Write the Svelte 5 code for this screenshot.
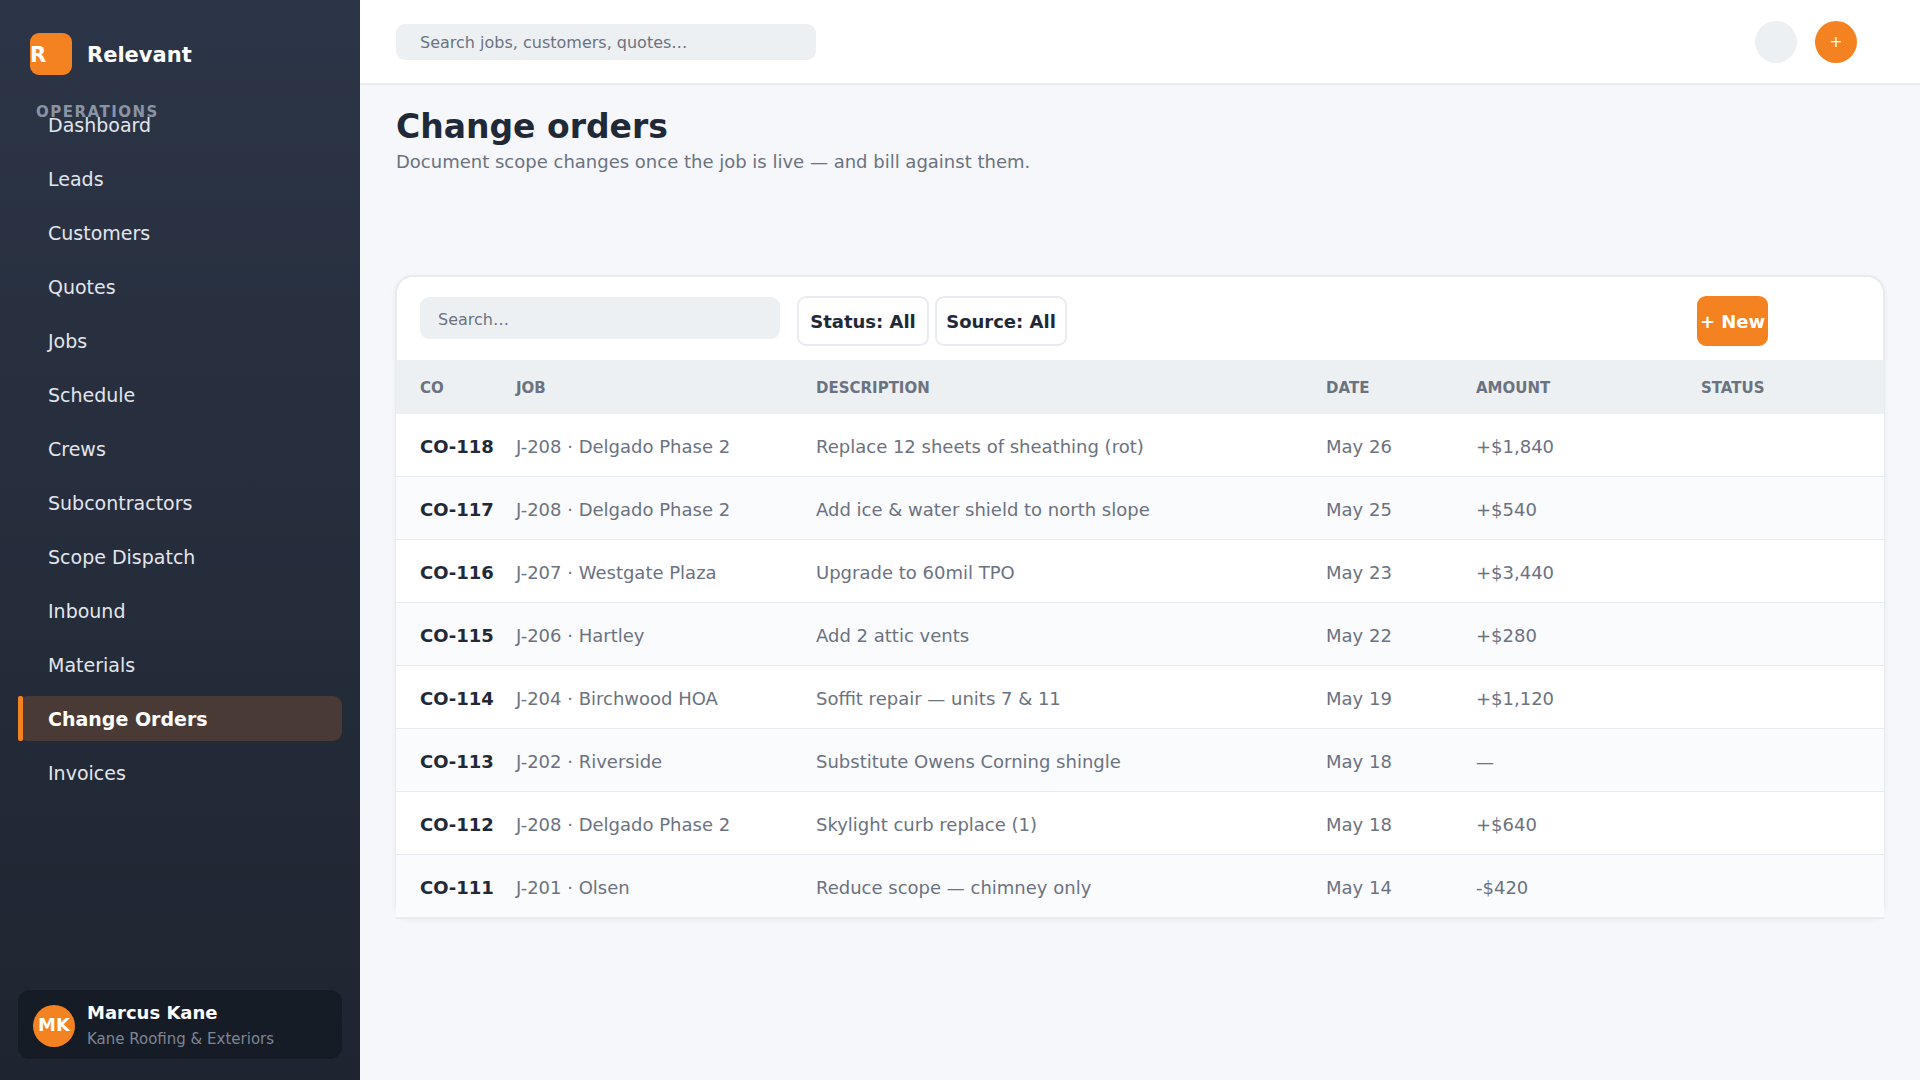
<script lang="ts">
  const navItems = [
    'Dashboard',
    'Leads',
    'Customers',
    'Quotes',
    'Jobs',
    'Schedule',
    'Crews',
    'Subcontractors',
    'Scope Dispatch',
    'Inbound',
    'Materials',
    'Change Orders',
    'Invoices'
  ];

  const orders = [
    { id: 'CO-118', job: 'J-208 · Delgado Phase 2', description: 'Replace 12 sheets of sheathing (rot)', date: 'May 26', amount: '+$1,840' },
    { id: 'CO-117', job: 'J-208 · Delgado Phase 2', description: 'Add ice & water shield to north slope', date: 'May 25', amount: '+$540' },
    { id: 'CO-116', job: 'J-207 · Westgate Plaza', description: 'Upgrade to 60mil TPO', date: 'May 23', amount: '+$3,440' },
    { id: 'CO-115', job: 'J-206 · Hartley', description: 'Add 2 attic vents', date: 'May 22', amount: '+$280' },
    { id: 'CO-114', job: 'J-204 · Birchwood HOA', description: 'Soffit repair — units 7 & 11', date: 'May 19', amount: '+$1,120' },
    { id: 'CO-113', job: 'J-202 · Riverside', description: 'Substitute Owens Corning shingle', date: 'May 18', amount: '—' },
    { id: 'CO-112', job: 'J-208 · Delgado Phase 2', description: 'Skylight curb replace (1)', date: 'May 18', amount: '+$640' },
    { id: 'CO-111', job: 'J-201 · Olsen', description: 'Reduce scope — chimney only', date: 'May 14', amount: '-$420' }
  ];

  let active = $state('Change Orders');
  let globalSearch = $state('');
  let tableSearch = $state('');

  let visible = $derived(
    orders.filter((o) =>
      `${o.id} ${o.job} ${o.description}`.toLowerCase().includes(tableSearch.trim().toLowerCase())
    )
  );

  function select(e: MouseEvent, item: string) {
    e.preventDefault();
    active = item;
  }
</script>

<div class="app">
  <aside class="sidebar">
    <div class="brand">
      <span class="logo">R</span>
      <span class="brand-name">Relevant</span>
    </div>

    <p class="section">OPERATIONS</p>
    <nav>
      {#each navItems as item}
        <a href="#top" class="nav-item" class:active={item === active} onclick={(e) => select(e, item)}>{item}</a>
      {/each}
    </nav>

    <div class="user">
      <span class="avatar">MK</span>
      <div>
        <div class="user-name">Marcus Kane</div>
        <div class="user-company">Kane Roofing &amp; Exteriors</div>
      </div>
    </div>
  </aside>

  <div class="main">
    <header class="topbar">
      <input
        class="search global"
        type="text"
        aria-label="Search jobs, customers, quotes"
        placeholder="Search jobs, customers, quotes…"
        bind:value={globalSearch}
      />
      <div class="actions">
        <button class="round" aria-label="Notifications"></button>
        <button class="round add">+</button>
      </div>
    </header>

    <main>
      <h1>Change orders</h1>
      <p class="subtitle">Document scope changes once the job is live — and bill against them.</p>

      <section class="card">
        <div class="toolbar">
          <input
            class="search local"
            type="text"
            aria-label="Search change orders"
            placeholder="Search…"
            bind:value={tableSearch}
          />
          <div class="filters">
            <button class="btn">Status: All</button>
            <button class="btn">Source: All</button>
          </div>
          <button class="btn primary">+ New</button>
        </div>

        <table>
          <colgroup>
            <col class="col-id" />
            <col class="col-job" />
            <col />
            <col class="col-date" />
            <col class="col-amount" />
            <col class="col-status" />
          </colgroup>
          <thead>
            <tr>
              <th>CO</th>
              <th>JOB</th>
              <th>DESCRIPTION</th>
              <th>DATE</th>
              <th>AMOUNT</th>
              <th>STATUS</th>
            </tr>
          </thead>
          <tbody>
            {#each visible as order (order.id)}
              <tr>
                <td class="id">{order.id}</td>
                <td>{order.job}</td>
                <td>{order.description}</td>
                <td>{order.date}</td>
                <td>{order.amount}</td>
                <td></td>
              </tr>
            {/each}
          </tbody>
        </table>
      </section>
    </main>
  </div>
</div>

<style>
  :global(body) {
    background: #f5f7fb;
  }

  .app {
    display: flex;
    min-height: 100vh;
    font-family: 'DejaVu Sans', sans-serif;
    font-size: 18px;
    color: #1f2937;
  }

  .app * {
    box-sizing: border-box;
  }

  input,
  button {
    font-family: inherit;
  }

  .sidebar {
    flex: 0 0 360px;
    display: flex;
    flex-direction: column;
    padding: 33px 18px 21px;
    background: linear-gradient(180deg, #2c3547, #1f2530);
  }

  .brand {
    display: flex;
    gap: 15px;
    padding-left: 12px;
    color: #fff;
    font-size: 21px;
    font-weight: 700;
    line-height: 45px;
  }

  .logo {
    width: 42px;
    height: 42px;
    border-radius: 9px;
    background: #f58220;
  }

  /* the section label sits right on top of the first item */
  .section {
    margin: 25px 0 -19px;
    padding-left: 18px;
    color: #8a93a3;
    font-size: 15px;
    font-weight: 700;
    line-height: 18px;
    letter-spacing: 0.1em;
  }

  nav {
    display: flex;
    flex-direction: column;
    gap: 9px;
  }

  .nav-item {
    height: 45px;
    padding-left: 30px;
    border-radius: 9px;
    color: #e2e6ec;
    font-size: 19px;
    line-height: 47px;
    text-decoration: none;
  }

  .nav-item.active {
    display: flex;
    padding-left: 0;
    background: #4a3a35;
    color: #fff;
    font-weight: 700;
  }

  .nav-item.active::before {
    content: '';
    width: 5px;
    margin-right: 25px;
    border-radius: 2px;
    background: #f58220;
  }

  .user {
    display: flex;
    align-items: center;
    gap: 12px;
    height: 69px;
    margin-top: auto;
    padding: 2px 0 0 15px;
    border-radius: 12px;
    background: #161c25;
  }

  .avatar {
    width: 42px;
    height: 42px;
    border-radius: 50%;
    background: #f58220;
    color: #fff;
    font-weight: 700;
    line-height: 40px;
    text-align: center;
  }

  .user-name {
    color: #fff;
    font-weight: 700;
    line-height: 26px;
  }

  .user-company {
    color: #7d8593;
    font-size: 15px;
    line-height: 26px;
  }

  .main {
    flex: 1;
    min-width: 0;
  }

  .topbar {
    display: flex;
    align-items: center;
    justify-content: space-between;
    height: 85px;
    padding: 0 63px 0 36px;
    border-bottom: 2px solid #e8ecf0;
    background: #fff;
  }

  .search {
    border: none;
    border-radius: 9px;
    outline: none;
    background: #ecf0f3;
    color: #1f2937;
    font-size: 16px;
  }

  .search::placeholder {
    color: #6b7280;
    opacity: 1;
  }

  .global {
    width: 420px;
    height: 36px;
    padding: 2px 24px 0;
  }

  .actions {
    display: flex;
    gap: 18px;
  }

  .round {
    width: 42px;
    height: 42px;
    padding: 0;
    border: none;
    border-radius: 50%;
    background: #ecf0f3;
    cursor: pointer;
  }

  .round.add {
    background: #f58220;
    color: #fff;
    font-size: 16px;
  }

  main {
    padding: 22px 35px 36px;
  }

  h1 {
    margin: 0 0 3px;
    padding-left: 1px;
    font-size: 33px;
    line-height: 40px;
  }

  .subtitle {
    margin: 0 0 101px;
    padding-left: 1px;
    color: #6b7280;
    line-height: 24px;
  }

  .card {
    border: 2px solid #e8ebf0;
    border-radius: 18px;
    background: #fff;
    box-shadow: 0 2px 6px rgba(31, 41, 55, 0.05);
  }

  .toolbar {
    display: flex;
    align-items: flex-start;
    gap: 17px;
    height: 83px;
    padding: 19px 115px 0 23px;
  }

  .local {
    width: 360px;
    height: 42px;
    margin-top: 1px;
    padding: 3px 18px 0;
  }

  .filters {
    display: flex;
    gap: 6px;
  }

  .btn {
    width: 132px;
    height: 50px;
    padding: 1px 0 0;
    border: 2px solid #e8ebf0;
    border-radius: 9px;
    background: #fff;
    color: #1f2937;
    font-size: 18px;
    font-weight: 700;
    white-space: nowrap;
    cursor: pointer;
  }

  .btn.primary {
    width: 71px;
    margin-left: auto;
    border-color: #f58220;
    background: #f58220;
    color: #fff;
  }

  /* rows run over the card's side and bottom borders */
  table {
    width: calc(100% + 2px);
    margin: 0 -1px -2px;
    border-collapse: separate;
    border-spacing: 0;
    table-layout: fixed;
  }

  .col-id {
    width: 120px;
  }

  .col-job {
    width: 300px;
  }

  .col-date {
    width: 150px;
  }

  .col-amount {
    width: 225px;
  }

  .col-status {
    width: 183px;
  }

  th,
  td {
    padding: 3px 0 0;
    text-align: left;
  }

  th:first-child,
  td:first-child {
    padding-left: 24px;
  }

  th {
    height: 54px;
    padding-top: 1px;
    background: #ecf0f3;
    color: #6b7280;
    font-size: 15px;
    font-weight: 700;
  }

  td {
    height: 63px;
    border-bottom: 1px solid #e8ecf0;
    background: #fff;
    color: #6b7280;
  }

  tr:nth-child(even) td {
    background: #fafbfd;
  }

  tr:last-child td {
    height: 64px;
    border-bottom: 2px solid #e8ebf0;
  }

  td.id {
    color: #1f2937;
    font-weight: 700;
  }
</style>
